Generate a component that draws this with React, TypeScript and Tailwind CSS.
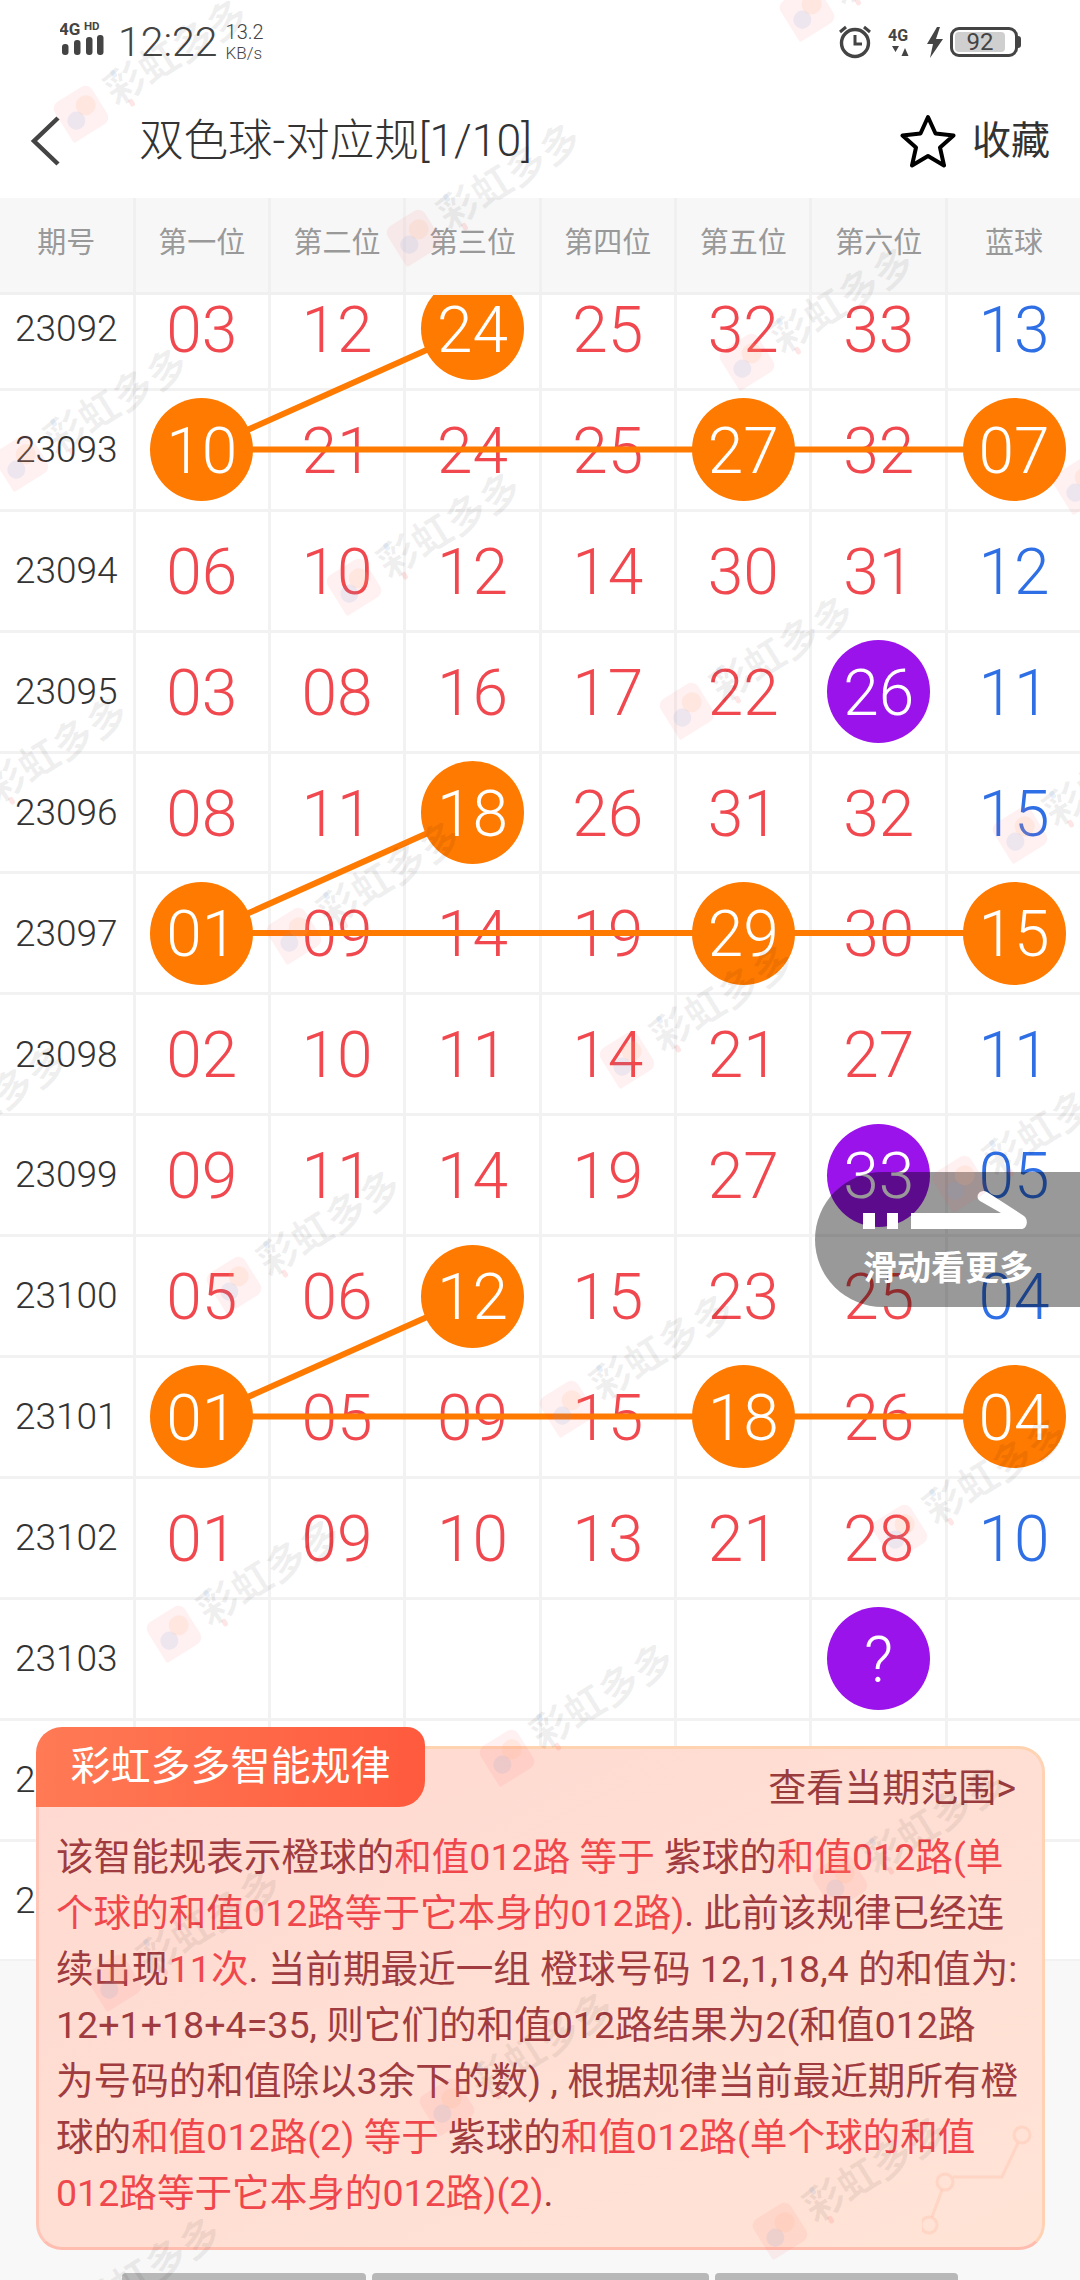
const FONT = 'font-["Roboto","Noto_Sans_CJK_SC",sans-serif]';

type Kind = "n" | "o" | "p";
type Cell = { v: string; k?: Kind };

const o = (v: string): Cell => ({ v, k: "o" });
const p = (v: string): Cell => ({ v, k: "p" });
const n = (v: string): Cell => ({ v });
const row = (id: string, ...vals: (string | Cell)[]) => ({
  id,
  cells: vals.map((c) => (typeof c === "string" ? n(c) : c)),
});

const ROWS = [
  row("23092", "03", "12", o("24"), "25", "32", "33", "13"),
  row("23093", o("10"), "21", "24", "25", o("27"), "32", o("07")),
  row("23094", "06", "10", "12", "14", "30", "31", "12"),
  row("23095", "03", "08", "16", "17", "22", p("26"), "11"),
  row("23096", "08", "11", o("18"), "26", "31", "32", "15"),
  row("23097", o("01"), "09", "14", "19", o("29"), "30", o("15")),
  row("23098", "02", "10", "11", "14", "21", "27", "11"),
  row("23099", "09", "11", "14", "19", "27", p("33"), "05"),
  row("23100", "05", "06", o("12"), "15", "23", "25", "04"),
  row("23101", o("01"), "05", "09", "15", o("18"), "26", o("04")),
  row("23102", "01", "09", "10", "13", "21", "28", "10"),
  row("23103", "", "", "", "", "", p("?"), ""),
  row("23104", "", "", "", "", "", "", ""),
  row("23105", "", "", "", "", "", "", ""),
];

const HEADS = ["第一位", "第二位", "第三位", "第四位", "第五位", "第六位", "蓝球"];

// Column centres and row centres inside the scrolling table body
const colX = (i: number) => 201.7 + 135.4 * i;
const rowY = (r: number) => 34.5 + 120.9 * r;

function Number_({ cell, blue }: { cell: Cell; blue: boolean }) {
  if (!cell.v) return null;
  if (cell.k) {
    return (
      <span
        className={`relative z-10 flex h-[103px] w-[103px] shrink-0 items-center justify-center rounded-full pt-[4px] text-[64px] font-light text-white ${
          cell.k === "o" ? "bg-[#ff7a00]" : "bg-[#9a13ea]"
        }`}
      >
        {cell.v}
      </span>
    );
  }
  return (
    <span className={`mt-[4px] text-[64px] font-light ${blue ? "text-[#2f6fe6]" : "text-[#f0484e]"}`}>{cell.v}</span>
  );
}

function Links() {
  return (
    <svg className="absolute left-0 top-0 z-[5]" width="1080" height="1700" fill="none" stroke="#ff7a00" strokeWidth="6">
      {[1, 5, 9].map((r) => (
        <g key={r}>
          <line x1={colX(0)} y1={rowY(r) - 1} x2={colX(6)} y2={rowY(r) - 1} />
          <line x1={colX(0)} y1={rowY(r)} x2={colX(2)} y2={rowY(r - 1)} />
        </g>
      ))}
    </svg>
  );
}

function Signal() {
  return (
    <svg width="46" height="36" viewBox="0 0 46 36" className="mb-[8px]">
      <text x="-1" y="15" fontSize="17" fontWeight="700" fill="#444" fontFamily="Roboto">4G</text>
      <text x="24" y="10" fontSize="11.500" fontWeight="700" fill="#444" fontFamily="Roboto">HD</text>
      <g fill="#444">
        <rect x="2" y="24" width="6.500" height="11" rx="3" />
        <rect x="14" y="20" width="6.500" height="15" rx="3" />
        <rect x="26" y="17" width="6.500" height="18" rx="3" />
        <rect x="37" y="15" width="6.500" height="20" rx="3" />
      </g>
    </svg>
  );
}

function Alarm() {
  return (
    <svg width="36" height="34" viewBox="0 0 36 34" fill="none" stroke="#444" strokeWidth="3.400">
      <circle cx="18" cy="18" r="13.500" />
      <path d="M18 10v9h7" strokeWidth="3" />
      <path d="M3 7l6-5M33 7l-6-5" strokeWidth="3" />
    </svg>
  );
}

function Net4G() {
  return (
    <svg width="26" height="32" viewBox="0 0 26 32">
      <text x="1" y="15" fontSize="16" fontWeight="700" fill="#444" fontFamily="Roboto">4G</text>
      <path d="M5 20h7l-3.500 6zM14.500 30h7l-3.500-8z" fill="#444" />
    </svg>
  );
}

function Bolt() {
  return (
    <svg width="18" height="31" viewBox="0 0 18 31">
      <path d="M11 0L1 17h6L4 31l13-19h-7l4-12z" fill="#444" />
    </svg>
  );
}

function Battery() {
  return (
    <div className="flex items-center">
      <div className="flex h-[30px] w-[68px] items-center rounded-[9px] border-[3px] border-[#444] p-[2px]">
        <div className="flex h-full w-[50px] items-center justify-center rounded-[4px] bg-[#cfcfcf] text-[24px] leading-none text-[#444]">
          92
        </div>
      </div>
      <div className="h-[12px] w-[3px] rounded-r bg-[#444]" />
    </div>
  );
}

function StatusBar() {
  return (
    <div className="flex h-[84px] items-center justify-between pl-[60px] pr-[59px] text-[#444]">
      <div className="flex items-center">
        <Signal />
        <span className="ml-[12px] text-[41px] font-light leading-none">12:22</span>
        <div className="ml-[8px] flex flex-col items-start text-[20px] font-light leading-[22px]">
          <span>13.2</span>
          <span className="text-[17px] leading-[20px]">KB/s</span>
        </div>
      </div>
      <div className="flex items-center gap-[14px]">
        <Alarm />
        <Net4G />
        <div className="-ml-[1px] flex items-center gap-[6px]">
          <Bolt />
          <Battery />
        </div>
      </div>
    </div>
  );
}

function NavBar() {
  return (
    <div className="flex h-[114px] items-center justify-between pl-[30px] pr-[30px]">
      <div className="flex items-center">
        <svg width="30" height="50" viewBox="0 0 30 50" fill="none" stroke="#444" strokeWidth="4.500">
          <path d="M28 2L4 25l24 23" />
        </svg>
        <span className="ml-[79px] text-[44.500px] font-light leading-none text-[#333]">双色球-对应规[1/10]</span>
      </div>
      <div className="flex items-center gap-[16px]">
        <svg width="56" height="54" viewBox="0 0 56 54" fill="none" stroke="#000" strokeWidth="4" strokeLinejoin="round">
          <path d="M28 3l7.500 16.500 18 2-13.500 12 4 18-16-9.500-16 9.500 4-18-13.500-12 18-2z" />
        </svg>
        <span className="text-[39px] leading-none text-[#333]">收藏</span>
      </div>
    </div>
  );
}

function Table() {
  return (
    <div>
      <div className="grid h-[97px] grid-cols-[132.5px_repeat(7,135.4px)] border-b-[3px] border-[#f0f0f0] bg-[#f7f7f7]">
        <div className="flex items-center justify-center pb-[2px] text-[29px] text-[#999]">期号</div>
        {HEADS.map((h) => (
          <div
            key={h}
            className="flex items-center justify-center border-l-[3px] border-[#f0f0f0] pb-[2px] text-[29px] text-[#999]"
          >
            {h}
          </div>
        ))}
      </div>
      <div className="relative h-[1666px] overflow-hidden bg-white">
        <Links />
        <div className="-mt-[25px]">
          {ROWS.map((r) => (
            <div key={r.id} className="grid h-[120.9px] grid-cols-[132.5px_repeat(7,135.4px)] border-b-[3px] border-[#f2f2f2]">
              <div className="flex items-center justify-center text-[37px] font-light text-[#333]">{r.id}</div>
              {r.cells.map((c, i) => (
                <div key={i} className="flex items-center justify-center border-l-[3px] border-[#f2f2f2]">
                  <Number_ cell={c} blue={i === 6} />
                </div>
              ))}
            </div>
          ))}
        </div>
      </div>
    </div>
  );
}

const R = ({ children }: { children: string }) => <span className="text-[#f0474c]">{children}</span>;

function RuleCard() {
  return (
    <div className="absolute left-[36px] top-[1746px] z-20 h-[504px] w-[1009px] rounded-[26px] border-[3px] border-b-[#ffbdb0] border-l-[#ffc6b8] border-r-[#ffd2b4] border-t-[#ffd2b0] bg-gradient-to-br from-[#ffd9d1] to-[#ffe4d6]">
      <div className="absolute -left-[3px] -top-[22px] flex h-[80px] w-[389px] items-center justify-center rounded-bl-none rounded-br-[26px] rounded-tl-[26px] rounded-tr-[18px] bg-gradient-to-r from-[#ff7a55] to-[#ff5a3d] text-[40px] text-white">
        彩虹多多智能规律
      </div>
      <div className="flex h-[58px] items-end justify-end pr-[26px] text-[38px] leading-none text-[#9a3c3e]">
        查看当期范围&gt;
      </div>
      <div className="mt-[22px] pl-[17px] text-[37.6px] leading-[56px] text-[#a03c3f]">
        <p className="whitespace-nowrap">该智能规表示橙球的<R>和值012路 等于</R> 紫球的<R>和值012路(单</R></p>
        <p className="whitespace-nowrap"><R>个球的和值012路等于它本身的012路)</R>. 此前该规律已经连</p>
        <p className="whitespace-nowrap">续出现<R>11次</R>. 当前期最近一组 橙球号码 12,1,18,4 的和值为:</p>
        <p className="whitespace-nowrap">12+1+18+4=35, 则它们的和值012路结果为2(和值012路</p>
        <p className="whitespace-nowrap">为号码的和值除以3余下的数) , 根据规律当前最近期所有橙</p>
        <p className="whitespace-nowrap">球的<R>和值012路(2) 等于</R> 紫球的<R>和值012路(单个球的和值</R></p>
        <p className="whitespace-nowrap"><R>012路等于它本身的012路)(2)</R>.</p>
      </div>
      <svg className="absolute bottom-0 right-0" width="120" height="130" fill="none" stroke="#ffb9a6" strokeOpacity="0.35" strokeWidth="3">
        <circle cx="100" cy="18" r="8" />
        <circle cx="23" cy="65" r="8" />
        <circle cx="7" cy="108" r="8" />
        <path d="M96 26L80 60H31M20 73L10 100" />
      </svg>
    </div>
  );
}

function SwipeHint() {
  return (
    <div className="absolute right-0 top-[1172px] z-20 flex h-[135px] w-[265px] flex-col items-start rounded-l-[68px] bg-black/40 pl-[48px] text-white">
      <svg width="170" height="60" viewBox="0 0 170 60" fill="#fff" className="mt-[18px]">
        <rect x="0" y="23" width="12" height="16" />
        <rect x="24" y="23" width="11" height="16" />
        <path d="M48 23h90L117 11c-6-4 0-13 7-9l37 24c5 4 3 13-3 13H48z" />
      </svg>
      <span className="-mt-[2px] w-[170px] whitespace-nowrap text-center text-[34px] font-bold leading-[40px]">滑动看更多</span>
    </div>
  );
}

// Repeating brand stamp laid over the whole page
const STAMPS: { x: number; y: number }[] = [];
for (let j = -1; j < 7; j++) {
  for (let i = -1; i < 6; i++) {
    const x = 81 + 333 * i - 60 * j;
    const y = 113 + 124 * i + 349 * j;
    if (x > -140 && x < 1180 && y > -20 && y < 2360) STAMPS.push({ x, y });
  }
}

function Stamp({ x, y }: { x: number; y: number }) {
  return (
    <div
      className="absolute flex origin-[22px_22px] -rotate-[32deg] items-center gap-[11px] whitespace-nowrap"
      style={{ left: x - 22, top: y - 22 }}
    >
      <div className="relative h-[44px] w-[44px] rounded-[8px] rounded-bl-[2px] bg-[#ff5050]/[0.08]">
        <div className="absolute left-[5px] top-[17px] h-[18px] w-[18px] rounded-full bg-[#6a9ae0]/[0.12]" />
        <div className="absolute left-[20px] top-[8px] h-[20px] w-[20px] rounded-full bg-[#ffb080]/[0.15]" />
      </div>
      <span className="relative text-[40px] font-bold leading-none text-black/[0.06]">
        彩虹多多
        <i className="absolute left-[13px] top-[0px] h-[8px] w-[5px] rounded-full bg-[#6a9ae0]/[0.14]" />
        <i className="absolute left-[13px] top-[34px] h-[8px] w-[5px] rounded-full bg-[#ff5050]/[0.14]" />
      </span>
    </div>
  );
}

export default function App() {
  return (
    <div className={`relative h-[2280px] w-[1080px] overflow-hidden bg-[#f8f8f8] ${FONT}`}>
      <div className="bg-white">
        <StatusBar />
        <NavBar />
      </div>
      <Table />
      <div className="mt-[312px] flex justify-center gap-[6px]">
        <div className="h-[8px] w-[244px] rounded-t-[4px] bg-[#b8b8b8]" />
        <div className="h-[8px] w-[337px] rounded-t-[4px] bg-[#b8b8b8]" />
        <div className="h-[8px] w-[243px] rounded-t-[4px] bg-[#b8b8b8]" />
      </div>
      <SwipeHint />
      <RuleCard />
      <div className="pointer-events-none absolute inset-0 z-30">
        {STAMPS.map((s) => (
          <Stamp key={`${s.x}-${s.y}`} x={s.x} y={s.y} />
        ))}
      </div>
    </div>
  );
}
